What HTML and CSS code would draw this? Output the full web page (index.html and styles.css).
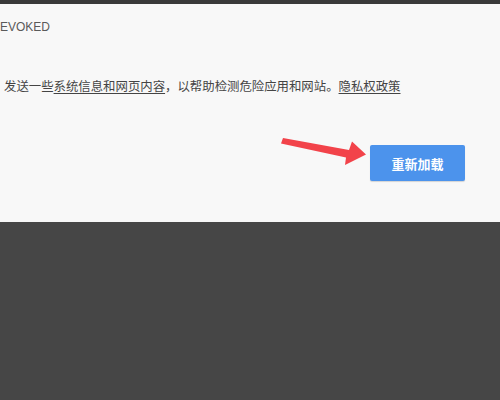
FILE: index.html
```html
<!DOCTYPE html>
<html lang="zh-CN">
<head>
<meta charset="utf-8">
<link rel="stylesheet" href="styles.css">
</head>
<body>
<div class="topband"></div>
<div class="panel">
  <div class="code">EVOKED</div>
  <p class="desc">发送一些<a class="link">系统信息和网页内容</a>，以帮助检测危险应用和网站。<a class="link">隐私权政策</a></p>
  <div class="actions">
    <button class="reload">重新加载</button>
  </div>
  <svg class="arrow" width="500" height="222" viewBox="0 0 500 222">
    <polygon points="283,138 281,143.5 346,157.5 345,165 366,154.5 352,141.5 349,150" fill="#f2434a"/>
  </svg>
</div>
<div class="bottom"></div>
</body>
</html>
```
FILE: styles.css
```css
html, body {
  margin: 0;
  padding: 0;
  width: 500px;
  height: 400px;
  background: #464646;
  overflow: hidden;
  font-family: "Liberation Sans", "Noto Sans CJK SC", sans-serif;
}
.topband {
  height: 4px;
  background: #3a3a3a;
}
.panel {
  position: relative;
  height: 218px;
  background: #f8f8f8;
  display: flex;
  flex-direction: column;
  box-sizing: border-box;
  padding-top: 16px;
}
.code {
  font-size: 12px;
  line-height: 14px;
  color: #5a5a5a;
}
.desc {
  margin: 45px 0 0 4px;
  font-size: 12.4px;
  line-height: 16px;
  color: #444;
}
.link {
  color: #444;
  text-decoration: underline;
  text-underline-offset: 2px;
}
.actions {
  display: flex;
  justify-content: flex-end;
  padding-right: 35px;
  margin-top: 50px;
}
.reload {
  width: 95px;
  height: 36px;
  border: none;
  border-radius: 2px;
  background: #4c93ec;
  color: #fff;
  font-family: "Noto Sans CJK SC", sans-serif;
  font-size: 13px;
  font-weight: bold;
  box-shadow: 0 1px 1px rgba(0,0,0,0.15);
}
.arrow {
  position: absolute;
  left: 0;
  top: -4px;
}
```
